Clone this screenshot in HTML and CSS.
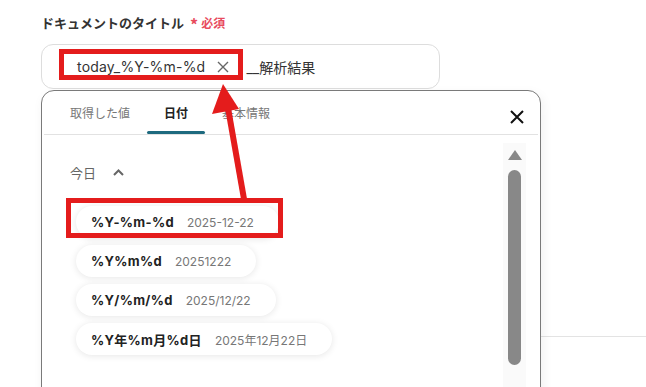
FILE: index.html
```html
<!DOCTYPE html>
<html lang="ja">
<head>
  <meta charset="UTF-8" />
  <meta name="viewport" content="width=device-width, initial-scale=1.0"/>
  <title>ドキュメントのタイトル</title>
  <link rel="stylesheet" href="styles.css">
</head>
<body>

<div class="page">
  <div class="field-label">
    ドキュメントのタイトル
    <span class="req-mark">*</span>
    <span class="req">必須</span>
  </div>

  <div class="input-box">
    <span class="token">today_%Y-%m-%d
      <svg class="token-x" width="12" height="12" viewBox="0 0 12 12">
        <path d="M1 1 L11 11 M11 1 L1 11" stroke="#666" stroke-width="1.4" fill="none"/>
      </svg>
    </span>
    <span class="suffix">__解析結果</span>
  </div>

  <div class="section-rule"></div>

  <!-- 値の選択パネル -->
  <div class="picker">
    <div class="picker-head">
      <div class="tab">取得した値</div>
      <div class="tab active">日付</div>
      <div class="tab">基本情報</div>
      <svg class="close" width="14" height="14" viewBox="0 0 14 14">
        <path d="M1 1 L13 13 M13 1 L1 13" stroke="#111" stroke-width="2" fill="none"/>
      </svg>
    </div>

    <div class="picker-body">
      <div class="group-title">
        今日
        <svg width="11" height="7" viewBox="0 0 11 7">
          <path d="M1 6 L5.5 1.5 L10 6" stroke="#666" stroke-width="2" fill="none"/>
        </svg>
      </div>
      <ul class="formats">
        <li class="fmt"><b>%Y-%m-%d</b><span>2025-12-22</span></li>
        <li class="fmt"><b>%Y%m%d</b><span>20251222</span></li>
        <li class="fmt"><b>%Y/%m/%d</b><span>2025/12/22</span></li>
        <li class="fmt"><b>%Y年%m月%d日</b><span>2025年12月22日</span></li>
      </ul>
    </div>

    <div class="scrollbar">
      <div class="scroll-up"></div>
      <div class="scroll-thumb"></div>
    </div>
  </div>

  <!-- 注釈 -->
  <div class="mark mark-token"></div>
  <div class="mark mark-fmt"></div>
  <svg class="arrow" width="646" height="387" viewBox="0 0 646 387">
    <line x1="244" y1="199" x2="228" y2="108" stroke="#e41c1c" stroke-width="6"/>
    <polygon points="223,84 212,114 239,109" fill="#e41c1c"/>
  </svg>
</div>

</body>
</html>
```

FILE: styles.css
```css
body {
  margin: 0;
  background-color: #fff;
  font-family: Inter, "Noto Sans CJK JP", sans-serif;
  color: #333;
}
.page {
  position: relative;
  height: 387px;
  overflow: hidden;
  padding: 13px 0 0 41px;
  box-sizing: border-box;
}
.field-label {
  display: flex;
  align-items: center;
  height: 18px;
  font-family: "Noto Sans CJK JP", sans-serif;
  font-size: 13px;
  font-weight: 600;
  color: #333;
}
.req-mark {
  color: #e84b5d;
  font-size: 16px;
  margin-left: 6px;
  margin-top: 3px;
}
.req {
  color: #e84b5d;
  font-size: 12px;
  margin-left: 3px;
}
.input-box {
  display: flex;
  align-items: center;
  width: 399px;
  height: 45px;
  margin-top: 13px;
  box-sizing: border-box;
  border: 1px solid #ddd;
  border-radius: 12px;
  font-size: 14px;
  color: #333;
}
.token {
  display: inline-flex;
  align-items: center;
  gap: 12px;
  margin-left: 22px;
  padding: 0 8px 0 13px;
  letter-spacing: 0.2px;
}
.suffix {
  margin-left: 9px;
}
.section-rule {
  height: 1px;
  background: #e3e3e3;
  margin-top: 247px;
}
.picker {
  position: absolute;
  left: 41px;
  top: 90px;
  width: 500px;
  height: 320px;
  box-sizing: border-box;
  background: #fff;
  border: 1px solid #7a7a7a;
  border-radius: 13px 13px 0 0;
  box-shadow: 2px 4px 12px rgba(0,0,0,0.06);
}
.picker-head {
  position: relative;
  display: flex;
  height: 43px;
  margin: 0 2px;
  padding-left: 9px;
  border-bottom: 1px solid #e2e2e2;
}
.tab {
  position: relative;
  padding: 0 17px;
  line-height: 44px;
  font-family: "Noto Sans CJK JP", sans-serif;
  font-size: 12px;
  color: #777;
}
.tab.active {
  color: #222;
  font-weight: 700;
}
.tab.active::after {
  content: "";
  position: absolute;
  left: 0;
  right: 0;
  bottom: 0;
  height: 3px;
  border-radius: 2px;
  background: #1e6a7f;
}
.close {
  position: absolute;
  right: 14px;
  top: 19px;
}
.picker-body {
  padding: 27px 0 0 28px;
}
.group-title {
  display: flex;
  align-items: center;
  gap: 17px;
  height: 20px;
  font-family: "Noto Sans CJK JP", sans-serif;
  font-size: 13px;
  color: #666;
}
.formats {
  list-style: none;
  margin: 24px 0 0 6px;
  padding: 0;
  display: flex;
  flex-direction: column;
  align-items: flex-start;
  gap: 7px;
}
.fmt {
  display: flex;
  align-items: center;
  gap: 13px;
  height: 32px;
  padding: 0 25px 0 15px;
  border-radius: 16px;
  background: #fff;
  box-shadow: 0 1px 7px rgba(0,0,0,0.1);
}
.fmt b {
  font-size: 13px;
  font-weight: 700;
  letter-spacing: 0.3px;
  color: #222;
}
.fmt span {
  font-size: 12px;
  color: #777;
}
.scrollbar {
  position: absolute;
  right: 14px;
  top: 52px;
  bottom: 0;
  width: 23px;
  background: #fafafa;
}
.scroll-up {
  width: 0;
  height: 0;
  margin: 7px auto 0;
  border-left: 7px solid transparent;
  border-right: 7px solid transparent;
  border-bottom: 10px solid #888;
}
.scroll-thumb {
  width: 13px;
  height: 195px;
  margin: 10px auto 0;
  border-radius: 7px;
  background: #888;
}
.mark {
  position: absolute;
  box-sizing: border-box;
  border: 5px solid #e41c1c;
}
.mark-token {
  left: 59px;
  top: 49px;
  width: 184px;
  height: 31px;
}
.mark-fmt {
  left: 66px;
  top: 198px;
  width: 217px;
  height: 40px;
}
.arrow {
  position: absolute;
  left: 0;
  top: 0;
  pointer-events: none;
}
```
